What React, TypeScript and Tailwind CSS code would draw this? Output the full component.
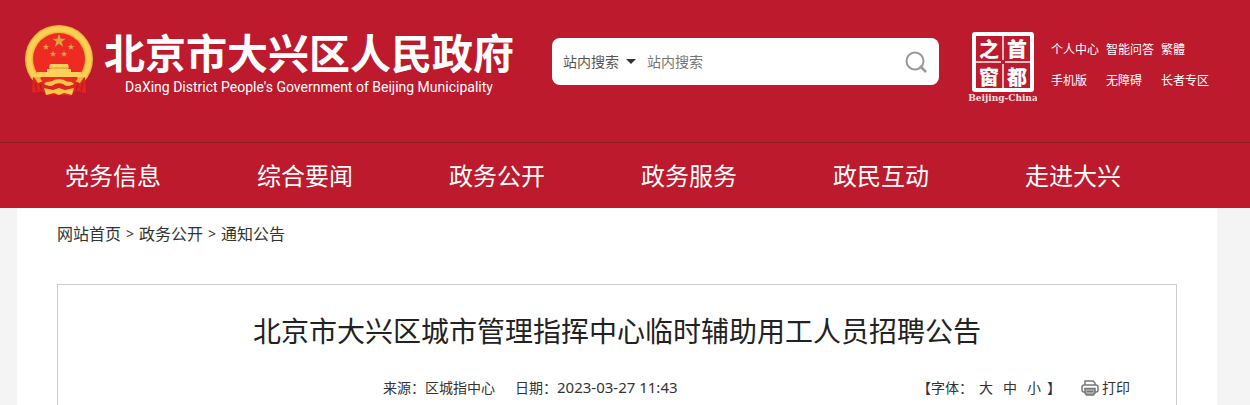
import { useState } from 'react'

const navItems = ['党务信息', '综合要闻', '政务公开', '政务服务', '政民互动', '走进大兴']

const quickLinks = ['个人中心', '智能问答', '繁體', '手机版', '无障碍', '长者专区']

const breadcrumbs = ['网站首页', '政务公开', '通知公告']

const fontSizes = ['大', '中', '小']

const STAR = 'M0-1L.24-.32.95-.31.38.12.59.81 0 .4-.59.81-.38.12-.95-.31-.24-.32z'

function Emblem() {
  return (
    <svg width="70" height="74" viewBox="0 0 70 74" className="shrink-0" aria-hidden="true">
      <circle cx="35" cy="35" r="34" fill="#f0b83a" />
      <circle cx="35" cy="35" r="30" fill="none" stroke="#f9cf55" strokeWidth="5" />
      <circle cx="35" cy="35" r="26" fill="#ee2a22" />
      <path d="M9 53l-1 16 10-2 6 5 11 1 11-1 6-5 10 2-1-16-9 4H18z" fill="#e02420" />
      <path d="M10 53c5-1 8 1 10 4l-6 2zM60 53c-5-1-8 1-10 4l6 2z" fill="#f0b83a" />
      <g fill="#d9a441">
        <path d={STAR} transform="translate(35 17) scale(7)" />
        <path d={STAR} transform="translate(22 23) scale(3.500)" />
        <path d={STAR} transform="translate(47 23) scale(3.500)" />
        <path d={STAR} transform="translate(29 30) scale(3.500)" />
        <path d={STAR} transform="translate(40 30) scale(3.500)" />
      </g>
      <path d="M26 40h18l1 4h-1v1h3v3H23v-3h3v-1h-1z" fill="#fbd15c" />
      <path d="M25 44h20" stroke="#e98b2d" />
      <path d="M13 48h44l1 5H12z" fill="#fbd15c" />
      <path d="M16 54h38l-4 6H20z" fill="#ee2a22" />
      <path d="M20 60c4-4 7-1 10-4 2-1 8-1 10 0 3 3 6 0 10 4-3 2-8 3-11 0-2-1-6-1-8 0-3 3-8 2-11 0z" fill="#f8c948" />
      <path d="M20 64l9 2 6-2 6 2 9-2-2 7-8-2-5 2-5-2-8 2z" fill="#f8c948" />
      <path d="M11 59l2 8M16 60l2 6M59 59l-2 8M54 60l-2 6M26 72h18" stroke="#b5121a" fill="none" />
    </svg>
  )
}

function CapitalSeal() {
  return (
    <svg width="70" height="72" viewBox="0 0 70 72" className="shrink-0" aria-hidden="true">
      <rect x="7" y="2" width="58" height="56" rx="1" fill="none" stroke="#fff" strokeWidth="4" />
      <path d="M36 4v24M36 32v25M9 30h25M38 30h25" stroke="#fff" strokeWidth="2" opacity=".7" />
      <g fill="#fff" fontWeight="900" fontSize="20" fontFamily="'Noto Sans CJK SC', sans-serif">
        <text x="12" y="25">之</text>
        <text x="40" y="25">首</text>
        <text x="12" y="53">窗</text>
        <text x="40" y="53">都</text>
      </g>
      <text
        x="36"
        y="69"
        textAnchor="middle"
        fill="#fff"
        opacity=".85"
        fontSize="9"
        fontWeight="700"
        fontFamily="'DejaVu Serif', serif"
      >
        Beijing-China
      </text>
    </svg>
  )
}

function PrinterIcon() {
  return (
    <svg width="18" height="16" viewBox="0 0 18 16" fill="none" stroke="#777" aria-hidden="true">
      <path d="M4 5V1h8l2 2v2" strokeWidth="1.500" />
      <rect x="1" y="5" width="16" height="7" rx="2" strokeWidth="1.500" />
      <path d="M4 8.500h10V13l-1.500 2h-7L4 13z" fill="#aaa" strokeWidth="1.500" />
      <path d="M6 11.500h6" />
    </svg>
  )
}

function SearchBox() {
  const [scope, setScope] = useState('站内搜索')
  const [keyword, setKeyword] = useState('')

  return (
    <form
      onSubmit={(e) => e.preventDefault()}
      className="mt-[14px] ml-[38px] flex h-[47px] max-w-[387px] flex-1 items-center rounded-lg bg-white pr-3 pl-[11px] text-sm"
    >
      <select
        aria-label="搜索范围"
        value={scope}
        onChange={(e) => setScope(e.target.value)}
        className="w-14 shrink-0 appearance-none bg-transparent text-[#555] outline-none"
      >
        <option>站内搜索</option>
      </select>
      <svg width="10" height="5" viewBox="0 0 10 5" className="mx-[7px] shrink-0" aria-hidden="true">
        <path d="M0 0h10L5 5z" fill="#333" />
      </svg>
      <input
        type="text"
        aria-label="搜索内容"
        placeholder="站内搜索"
        value={keyword}
        onChange={(e) => setKeyword(e.target.value)}
        className="ml-1 min-w-0 flex-1 text-[#333] outline-none placeholder:text-[#757575]"
      />
      <button type="submit" aria-label="搜索">
        <svg width="22" height="22" viewBox="0 0 22 22" fill="none" stroke="#999" strokeWidth="2">
          <circle cx="10" cy="10" r="8.500" />
          <path d="M15 15l6 6" strokeWidth="2.500" />
        </svg>
      </button>
    </form>
  )
}

export default function App() {
  return (
    <div className="min-h-screen bg-[#f4f4f4] font-['Noto_Sans','Noto_Sans_CJK_SC',sans-serif] text-[#333]">
      <header className="bg-[#bd1a2d] pr-4 text-white">
        <div className="mx-auto flex max-w-[1200px] items-start pt-6 pb-[38px] pl-[7px]">
          <a href="#" className="flex gap-[10px]">
            <Emblem />
            <span className="flex flex-col items-center pt-1 whitespace-nowrap">
              <span className="font-['Noto_Sans_CJK_SC',sans-serif] text-[41px] leading-[46px] font-bold">
                北京市大兴区人民政府
              </span>
              <span className="mt-[3px] font-[Roboto,sans-serif] text-sm leading-5">
                DaXing District People's Government of Beijing Municipality
              </span>
            </span>
          </a>
          <SearchBox />
          <div className="mt-2 ml-7 flex gap-[14px]">
            <CapitalSeal />
            <ul className="grid grid-cols-3 content-start gap-x-[7px] gap-y-[11px] pt-2 text-xs leading-5 whitespace-nowrap">
              {quickLinks.map((link) => (
                <li key={link}>
                  <a href="#">{link}</a>
                </li>
              ))}
            </ul>
          </div>
        </div>
      </header>

      <nav className="border-t border-[#8f1a20] bg-[#bd1a2d] pr-4">
        <ul className="mx-auto flex max-w-[1200px] pr-12">
          {navItems.map((item) => (
            <li key={item} className="flex-1 text-center text-2xl leading-[65px] text-white">
              <a href="#">{item}</a>
            </li>
          ))}
        </ul>
      </nav>

      <div className="pr-4">
        <main className="mx-auto max-w-[1200px] bg-white px-10 pt-3">
          <ol className="flex gap-[5px] text-base leading-7">
            {breadcrumbs.map((crumb, i) => (
              <li key={crumb} className="flex gap-[5px]">
                {i > 0 && <span className="text-sm leading-7">&gt;</span>}
                <a href="#">{crumb}</a>
              </li>
            ))}
          </ol>

          <article className="mt-9 border border-b-0 border-[#ccc] px-[46px] pb-2">
            <h1 className="pt-6 text-center text-[28px] leading-[44px] text-[#222]">
              北京市大兴区城市管理指挥中心临时辅助用工人员招聘公告
            </h1>
            <div className="mt-6 flex items-center text-sm leading-5">
              <p className="flex flex-1 items-baseline gap-5 pl-[279px]">
                <span>来源：区城指中心</span>
                <span>
                  日期：<time className="text-[15px]">2023-03-27 11:43</time>
                </span>
              </p>
              <p className="flex gap-[10px]">
                <span className="-mr-1">【字体：</span>
                {fontSizes.map((size) => (
                  <button key={size} type="button">
                    {size}
                  </button>
                ))}
                <span className="-ml-1">】</span>
              </p>
              <button type="button" className="ml-5 flex items-center gap-[3px]">
                <PrinterIcon />
                打印
              </button>
            </div>
          </article>
        </main>
      </div>
    </div>
  )
}
